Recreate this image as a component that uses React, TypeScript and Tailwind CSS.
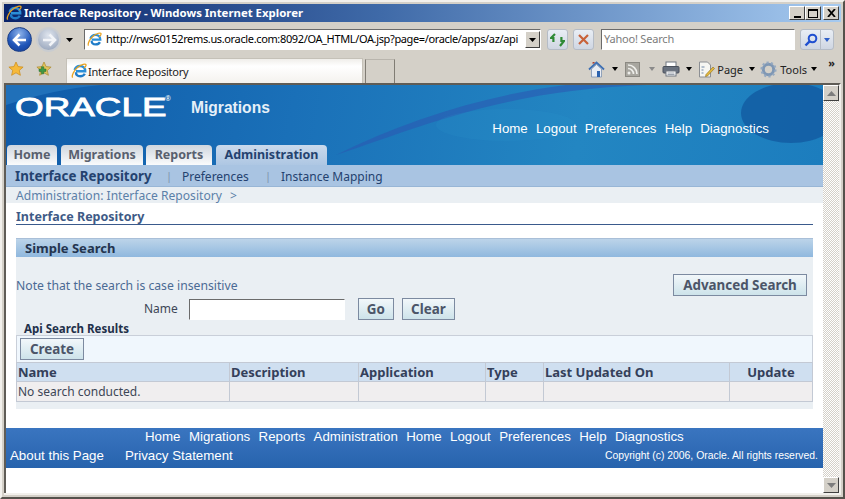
import React from 'react';

const IeLogo = ({ size = 16 }: { size?: number }) => (
  <svg width={size} height={size} viewBox="0 0 16 16" className="shrink-0">
    <path d="M5 8.2h9.2C14.2 5 12 3 9 3 6.6 3 4.4 4.6 3.6 7" fill="none" stroke="#2b8fd8" strokeWidth="2.4" />
    <path d="M13.8 10.8c-.8 1.5-2.4 2.5-4.6 2.5-2.6 0-4.2-1.8-4.3-4" fill="none" stroke="#1f7cc8" strokeWidth="2.4" />
    <path d="M1.6 14.6C.4 12.8 3 7 7 4c3.6-2.7 7.6-3.6 8-2.2.3 1-1 2.4-2 3.2" fill="none" stroke="#e9a21f" strokeWidth="1.3" />
  </svg>
);

const Arrow = ({ dir, dim }: { dir: 'left' | 'right'; dim?: boolean }) => (
  <div className={dim
    ? 'w-[25px] h-[25px] rounded-full border-2 border-[#c9ccd0] bg-[radial-gradient(circle_at_50%_30%,#dfe5ee,#8f9db5)] flex items-center justify-center'
    : 'w-[25px] h-[25px] rounded-full border border-[#1c3f86] bg-[radial-gradient(circle_at_50%_25%,#8fb4ea,#1f55b8_60%,#143c92)] flex items-center justify-center'}>
    <svg width="16" height="14" viewBox="0 0 16 14">
      <path d={dir === 'left' ? 'M7.5 1.5 2 7l5.5 5.5M2.5 7H14' : 'M8.5 1.5 14 7l-5.5 5.5M13.5 7H2'} fill="none" stroke={dim ? '#f2f4f8' : '#ffffff'} strokeWidth="2.6" />
    </svg>
  </div>
);

const Caret = ({ color = '#000', w = 6 }: { color?: string; w?: number }) => (
  <svg width={w} height="4" viewBox="0 0 7 4" preserveAspectRatio="none" className="shrink-0">
    <path d="M0 0h7L3.5 4z" fill={color} />
  </svg>
);

const Star = ({ plus }: { plus?: boolean }) => (
  <svg width="16" height="16" viewBox="0 0 16 16">
    <path d="M8 1l2.1 4.6 5 .5-3.8 3.3 1.1 4.9L8 11.8l-4.4 2.5 1.1-4.9L.9 6.1l5-.5z" fill={plus ? '#e3c35c' : '#f6b93a'} stroke={plus ? '#a98a30' : '#c98a18'} strokeWidth=".7" />
    {plus && <path d="M3 8h2.4V5.8h2.4V8h2.2v2.4H7.8v2.4H5.4v-2.4H3z" fill="#3f9a45" stroke="#256b2b" strokeWidth=".5" />}
  </svg>
);

const ToolButton = ({ children }: { children: React.ReactNode }) => (
  <div className="w-[21px] h-[21px] rounded-[3px] border border-[#b5bcc6] bg-[linear-gradient(#e9eef5,#cfd6e2)] flex items-center justify-center">
    {children}
  </div>
);

const OaButton = ({ label, className }: { label: string; className: string }) => (
  <button className={`h-[22px] border border-[#7c8aa0] bg-[linear-gradient(#f2f7fa,#cde3ea)] text-[13.4px] font-bold text-[#4b5568] flex items-center justify-center ${className}`}>
    {label}
  </button>
);

const Link = ({ children }: { children: React.ReactNode }) => (
  <span className="whitespace-nowrap">{children}</span>
);

const Tab = ({ label, active, w }: { label: string; active?: boolean; w: string }) => (
  <div className={`h-5 rounded-t-[4px] flex items-center justify-center text-[12.5px] font-bold ${w} ${active
    ? 'bg-[linear-gradient(#c9d9ec,#aec7e3)] text-[#24426f]'
    : 'bg-[linear-gradient(#cfd6de,#fafbfc)] text-[#58606e]'}`}>
    {label}
  </div>
);

const scrollDither = 'bg-[repeating-conic-gradient(#d4d0c8_0%_25%,#ffffff_0%_50%)] bg-[length:2px_2px]';

const ScrollButton = ({ up }: { up?: boolean }) => (
  <div className="w-4 h-4 bg-[#d4d0c8] border border-t-white border-l-white border-r-[#404040] border-b-[#404040] flex items-center justify-center">
    <svg width="9" height="5" viewBox="0 0 9 5">
      <path d={up ? 'M4.5 0 9 5H0z' : 'M0 0h9L4.5 5z'} fill="#7d7d7d" />
    </svg>
  </div>
);

const App = () => {
  return (
    <div className="w-[845px] h-[499px] overflow-hidden bg-[#d4d0c8] flex flex-col border-t-2 border-l-2 border-r-2 border-b-2 border-t-[#f2f0ec] border-l-[#f2f0ec] border-r-[#55524c] border-b-[#55524c] px-[2px] pt-[2px] font-['Noto_Sans',sans-serif]">
      {/* title bar */}
      <div className="h-[18px] shrink-0 flex items-center justify-between bg-[linear-gradient(90deg,#0a246a,#3f6aa8_45%,#a6caf0)] pl-[2px] pr-[2px]">
        <div className="flex items-center gap-[2px]">
          <IeLogo />
          <span className="text-[11.4px] font-bold text-white leading-none">Interface Repository - Windows Internet Explorer</span>
        </div>
        <div className="flex">
          {[
            <div key="a" className="w-[7px] h-[2px] bg-black mt-[7px]" />,
            <div key="b" className="w-[10px] h-[9px] border border-black border-t-2" />,
            <svg key="c" width="9" height="8" viewBox="0 0 9 8"><path d="M1 0l7 8M8 0 1 8" stroke="#000" strokeWidth="1.8" /></svg>,
          ].map((glyph, i) => (
            <div key={i} className={`w-4 h-[14px] bg-[#d4d0c8] border border-t-white border-l-white border-r-[#404040] border-b-[#404040] flex items-center justify-center ${i === 2 ? 'ml-[2px]' : ''}`}>
              {glyph}
            </div>
          ))}
        </div>
      </div>

      {/* address row */}
      <div className="h-[35px] shrink-0 flex items-center pl-[3px]">
        <Arrow dir="left" />
        <div className="ml-[4px]"><Arrow dir="right" dim /></div>
        <div className="ml-[5px]"><Caret w={7} /></div>
        <div className="ml-[11px] w-[457px] h-[21px] bg-white border border-t-[#6b6b6b] border-l-[#6b6b6b] border-r-white border-b-white flex items-center pl-[2px]">
          <IeLogo size={15} />
          <span className="ml-[4px] flex-1 min-w-0 whitespace-nowrap text-[11px] text-black tracking-[-0.36px]">http://rws60152rems.us.oracle.com:8092/OA_HTML/OA.jsp?page=/oracle/apps/az/api</span>
          <div className="shrink-0 w-[15px] h-[17px] bg-[#d4d0c8] border border-t-white border-l-white border-r-[#404040] border-b-[#404040] flex items-center justify-center">
            <Caret w={7} />
          </div>
        </div>
        <div className="ml-[6px]">
          <ToolButton>
            <svg width="15" height="14" viewBox="0 0 15 14">
              <path d="M5 1 1 5h2.4v4M10 13l4-5h-2.6V4" fill="none" stroke="#2f8a35" strokeWidth="2.2" />
            </svg>
          </ToolButton>
        </div>
        <div className="ml-[5px]">
          <ToolButton>
            <svg width="13" height="13" viewBox="0 0 13 13">
              <path d="M2 2l9 9M11 2l-9 9" stroke="#c8623a" strokeWidth="2.2" />
            </svg>
          </ToolButton>
        </div>
        <div className="ml-[7px] w-[194px] h-[21px] bg-white border border-t-[#6b6b6b] border-l-[#6b6b6b] border-r-white border-b-white flex items-center pl-[2px] text-[11px] text-[#7c7c7c] tracking-[-0.2px]">
          Yahoo! Search
        </div>
        <div className="ml-[5px] h-[21px] w-[34px] rounded-[3px] border border-[#b5bcc6] bg-[linear-gradient(#e9eef5,#cfd6e2)] flex items-center">
          <div className="w-[20px] flex justify-center border-r border-[#b5bcc6] h-full items-center">
            <svg width="14" height="14" viewBox="0 0 14 14">
              <circle cx="8.5" cy="5.5" r="3.8" fill="none" stroke="#1f4fd0" strokeWidth="2" />
              <path d="M5.6 8.4 1.5 12.5" stroke="#1f4fd0" strokeWidth="2.4" />
            </svg>
          </div>
          <div className="flex-1 flex justify-center"><Caret color="#2f5fc8" /></div>
        </div>
      </div>

      {/* favourites and tab row */}
      <div className="h-[26px] shrink-0 flex items-end pl-[4px]">
        <div className="flex self-center items-center gap-[12px] mb-[3px]">
          <Star />
          <Star plus />
        </div>
        <div className="ml-[14px] w-[297px] h-[25px] bg-[linear-gradient(#f0eeea,#ffffff_30%,#f4f2ee)] border border-b-0 border-[#c5c1b8] flex items-center pl-[4px] gap-[1px]">
          <IeLogo />
          <span className="text-[11px] tracking-[-0.22px] text-[#222] leading-none">Interface Repository</span>
        </div>
        <div className="ml-[2px] w-[30px] h-[24px] border border-b-0 border-t-[#b9b5ad] border-l-[#807c74] border-r-[#807c74] bg-[#d4d0c8]" />
        <div className="ml-auto self-center flex items-center text-[11px] text-[#222] mb-[2px] pr-[6px]">
          <svg width="17" height="17" viewBox="0 0 17 17">
            <path d="M1 8.5 8.5 1.5 16 8.5" fill="none" stroke="#3d6fb4" strokeWidth="1.8" />
            <path d="M3.5 8v8h10V8L8.5 3.5z" fill="#e9edf4" stroke="#7088aa" strokeWidth=".7" />
            <path d="M9 10h3v6H9z" fill="#2d63ae" />
            <path d="M4.6 3V1h2v1z" fill="#b04030" />
          </svg>
          <div className="ml-[7px]"><Caret /></div>
          <svg width="15" height="15" viewBox="0 0 15 15" className="ml-[7px]">
            <rect x=".5" y=".5" width="14" height="14" fill="#a8a69f" stroke="#8b8982" />
            <circle cx="4" cy="11" r="1.5" fill="#eeeeea" />
            <path d="M3 6.5a5.5 5.5 0 0 1 5.5 5.5M3 3a9 9 0 0 1 9 9" fill="none" stroke="#eeeeea" strokeWidth="1.7" />
          </svg>
          <div className="ml-[9px]"><Caret color="#8a8a8a" /></div>
          <svg width="18" height="16" viewBox="0 0 18 16" className="ml-[7px]">
            <rect x="4" y="1" width="10" height="5" fill="#fff" stroke="#6f7680" />
            <rect x="1" y="5.5" width="16" height="6.5" rx="1" fill="#68717e" stroke="#4a515c" />
            <rect x="4" y="10" width="10" height="5" fill="#fff" stroke="#6f7680" />
            <path d="M5.5 12h7M5.5 13.5h7" stroke="#9aa2ad" />
          </svg>
          <div className="ml-[6px]"><Caret /></div>
          <svg width="17" height="17" viewBox="0 0 17 17" className="ml-[6px]">
            <path d="M1.5 1h8l3 3v12h-11z" fill="#f6f6f2" stroke="#8c8f94" />
            <path d="M3.5 6h3M3.5 9h2M3.5 12h2" stroke="#6f88a8" strokeWidth="1.2" />
            <path d="M8 13.5 15 6l1.5 1.5-7 7.5-2 .5z" fill="#e5b93c" stroke="#8a6d1c" strokeWidth=".6" />
          </svg>
          <span className="ml-[2px] w-[25px] leading-none">Page</span>
          <div className="ml-[7px]"><Caret /></div>
          <svg width="17" height="17" viewBox="0 0 17 17" className="ml-[5px]">
            <circle cx="8.5" cy="8.5" r="5.2" fill="none" stroke="#7f97b4" strokeWidth="3" />
            <circle cx="8.5" cy="8.5" r="7" fill="none" stroke="#96a9c0" strokeWidth="2.2" strokeDasharray="2.2 2.2" />
          </svg>
          <span className="ml-[3px] w-[25px] leading-none">Tools</span>
          <div className="ml-[6px]"><Caret /></div>
          <span className="ml-[11px] mb-[14px] font-bold leading-none text-[11px]">»</span>
        </div>
      </div>

      {/* browser frame */}
      <div className="flex-1 min-h-0 flex border-t-2 border-l-2 border-[#5f5c56] border-r-2 border-r-[#f2f0ec]">
        <div className="w-[817px] bg-white flex flex-col">
          {/* branding */}
          <div className="relative h-[80px] shrink-0 overflow-hidden flex flex-col bg-[linear-gradient(100deg,#0f5aa8,#1a70b8_35%,#2386c2_70%,#1c7dbe)]">
            <svg className="absolute inset-0" width="817" height="80" viewBox="0 0 817 80">
              <path d="M330 70C420 40 500 5 640 0L560 0C480 10 400 35 330 70z" fill="#2b56b0" opacity=".55" />
              <path d="M0 20C60 0 120 -5 170 0L0 0z" fill="#2b7fc4" opacity=".6" />
              <ellipse cx="785" cy="28" rx="50" ry="30" fill="#12589f" opacity=".75" />
              <ellipse cx="500" cy="40" rx="70" ry="16" fill="#2c9ad0" opacity=".15" />
            </svg>
            <div className="relative h-[35px] shrink-0 flex items-start pl-[9px]">
              <span className="mt-[4px] w-[150px] shrink-0 text-[26.5px] leading-[36px] text-white [-webkit-text-stroke:0.8px_white] font-['Liberation_Sans',sans-serif] origin-left scale-x-[1.39] whitespace-nowrap">ORACLE</span>
              <span className="mt-[10px] w-[6px] shrink-0 text-[7px] leading-none text-white">®</span>
              <span className="mt-[12px] text-[15.6px] leading-[22px] font-bold text-[#e6f0f8] font-['Liberation_Sans',sans-serif] ml-[20px]">Migrations</span>
            </div>
            <div className="relative h-[17px] shrink-0 flex items-center justify-end pr-[54px] gap-[8.2px] text-[13.3px] text-white font-['Liberation_Sans',sans-serif]">
              <Link>Home</Link>
              <Link>Logout</Link>
              <Link>Preferences</Link>
              <Link>Help</Link>
              <Link>Diagnostics</Link>
            </div>
            <div className="relative mt-auto flex pl-[1px]">
              <Tab label="Home" w="w-[50px]" />
              <div className="w-[4px]" />
              <Tab label="Migrations" w="w-[82px]" />
              <div className="w-[3px]" />
              <Tab label="Reports" w="w-[66px]" />
              <div className="w-[4px]" />
              <Tab label="Administration" w="w-[111px]" active />
            </div>
          </div>

          {/* second level nav */}
          <div className="h-[22px] shrink-0 flex items-center pl-[9px] pt-[2px] bg-[#a9c4e2] border-b border-[#98b6d6] text-[#24426f] text-[12px]">
            <span className="font-bold text-[13.3px] w-[136px] whitespace-nowrap">Interface Repository</span>
            <span className="ml-[15px] w-[2px] text-[#7d93ad] text-[11px]">|</span>
            <span className="ml-[14px] w-[68px] whitespace-nowrap">Preferences</span>
            <span className="ml-[15px] w-[2px] text-[#7d93ad] text-[11px]">|</span>
            <span className="ml-[14px] whitespace-nowrap">Instance Mapping</span>
          </div>

          {/* breadcrumb */}
          <div className="h-4 shrink-0 flex items-center pl-[10px] pt-[2px] gap-[8px] bg-[#eaeff3] text-[12.1px] text-[#5b7fa8]">
            <span>Administration: Interface Repository</span>
            <span>&gt;</span>
          </div>

          {/* page */}
          <div className="flex-1 flex flex-col pl-[10px] pr-[10px]">
            <div className="mt-[6px] h-[15px] box-content flex items-center pt-[1px] text-[12.5px] font-bold text-[#3e5a86]">
              Interface Repository
            </div>
            <div className="h-[1px] -mt-[1px] shrink-0 bg-[#3a5a8c]" />
            <div className="mt-[13px] h-[19px] shrink-0 flex items-center pl-[9px] pt-[1px] bg-[linear-gradient(#bcd4e9,#8fb8de)] border-t border-[#a9bfd8] text-[13px] font-bold text-[#24344e]">
              Simple Search
            </div>
            <div className="h-[152px] shrink-0 bg-[#eaeff3] flex flex-col">
              <div className="mt-[17px] h-[22px] shrink-0 flex items-center justify-between pr-[6px]">
                <span className="text-[12.2px] text-[#4a6a94] pt-[2px]">Note that the search is case insensitive</span>
                <OaButton label="Advanced Search" className="w-[134px]" />
              </div>
              <div className="mt-[2px] h-[22px] shrink-0 flex items-center pl-[128px]">
                <span className="text-[12px] text-[#3d4656]">Name</span>
                <div className="ml-[11px] w-[156px] h-[21px] bg-white border border-t-[#6b6b6b] border-l-[#6b6b6b] border-r-white border-b-white" />
                <OaButton label="Go" className="ml-[13px] w-[36px]" />
                <OaButton label="Clear" className="ml-[8px] w-[53px]" />
              </div>
              <div className="h-[15px] shrink-0 pl-[8px] pt-[2px] flex items-center text-[11.5px] font-bold text-[#22304a]">Api Search Results</div>
              <div className="h-[27px] shrink-0 flex items-center pl-[3px] bg-[#f0f7fd] border border-b-0 border-[#c9cfd9]">
                <OaButton label="Create" className="w-[64px]" />
              </div>
              <table className="w-full border-collapse table-fixed text-[12px] leading-none">
                <colgroup>
                  <col className="w-[213px]" />
                  <col className="w-[129px]" />
                  <col className="w-[127px]" />
                  <col className="w-[58px]" />
                  <col className="w-[186px]" />
                  <col />
                </colgroup>
                <thead>
                  <tr className="h-[19px] bg-[#cfdff0] text-[#34405a] text-[13px]">
                    <th className="border border-[#c3c9d4] p-0 font-bold text-left pl-[1px]">Name</th>
                    <th className="border border-[#c3c9d4] p-0 font-bold text-left pl-[1px]">Description</th>
                    <th className="border border-[#c3c9d4] p-0 font-bold text-left pl-[1px]">Application</th>
                    <th className="border border-[#c3c9d4] p-0 font-bold text-left pl-[1px]">Type</th>
                    <th className="border border-[#c3c9d4] p-0 font-bold text-left pl-[1px]">Last Updated On</th>
                    <th className="border border-[#c3c9d4] p-0 font-bold text-center">Update</th>
                  </tr>
                </thead>
                <tbody>
                  <tr className="h-[20px] bg-[#f0eeef] text-[#3d4656]">
                    <td className="border border-[#c3c9d4] p-0 pl-[1px]">No search conducted.</td>
                    <td className="border border-[#c3c9d4]" />
                    <td className="border border-[#c3c9d4]" />
                    <td className="border border-[#c3c9d4]" />
                    <td className="border border-[#c3c9d4]" />
                    <td className="border border-[#c3c9d4]" />
                  </tr>
                </tbody>
              </table>
            </div>
          </div>

          {/* footer */}
          <div className="h-10 shrink-0 mb-[25px] flex flex-col bg-[linear-gradient(#3a75c0,#2763ad)] text-white text-[13.3px] font-['Liberation_Sans',sans-serif]">
            <div className="h-[17px] flex items-center pl-[139px] gap-[8.4px]">
              <Link>Home</Link>
              <Link>Migrations</Link>
              <Link>Reports</Link>
              <Link>Administration</Link>
              <Link>Home</Link>
              <Link>Logout</Link>
              <Link>Preferences</Link>
              <Link>Help</Link>
              <Link>Diagnostics</Link>
            </div>
            <div className="h-[21px] flex items-center pl-[4px] pr-[5px]">
              <Link>About this Page</Link>
              <span className="ml-[21px] whitespace-nowrap">Privacy Statement</span>
              <span className="ml-auto text-[10.4px] whitespace-nowrap">Copyright (c) 2006, Oracle. All rights reserved.</span>
            </div>
          </div>
        </div>

        {/* scrollbar */}
        <div className={`w-4 flex flex-col justify-between ${scrollDither}`}>
          <ScrollButton up />
          <ScrollButton />
        </div>
      </div>
      <div className="h-[2px] shrink-0 bg-[#f2f0ec]" />
      <div className="h-[2px] shrink-0" />
    </div>
  );
};

export default App;
